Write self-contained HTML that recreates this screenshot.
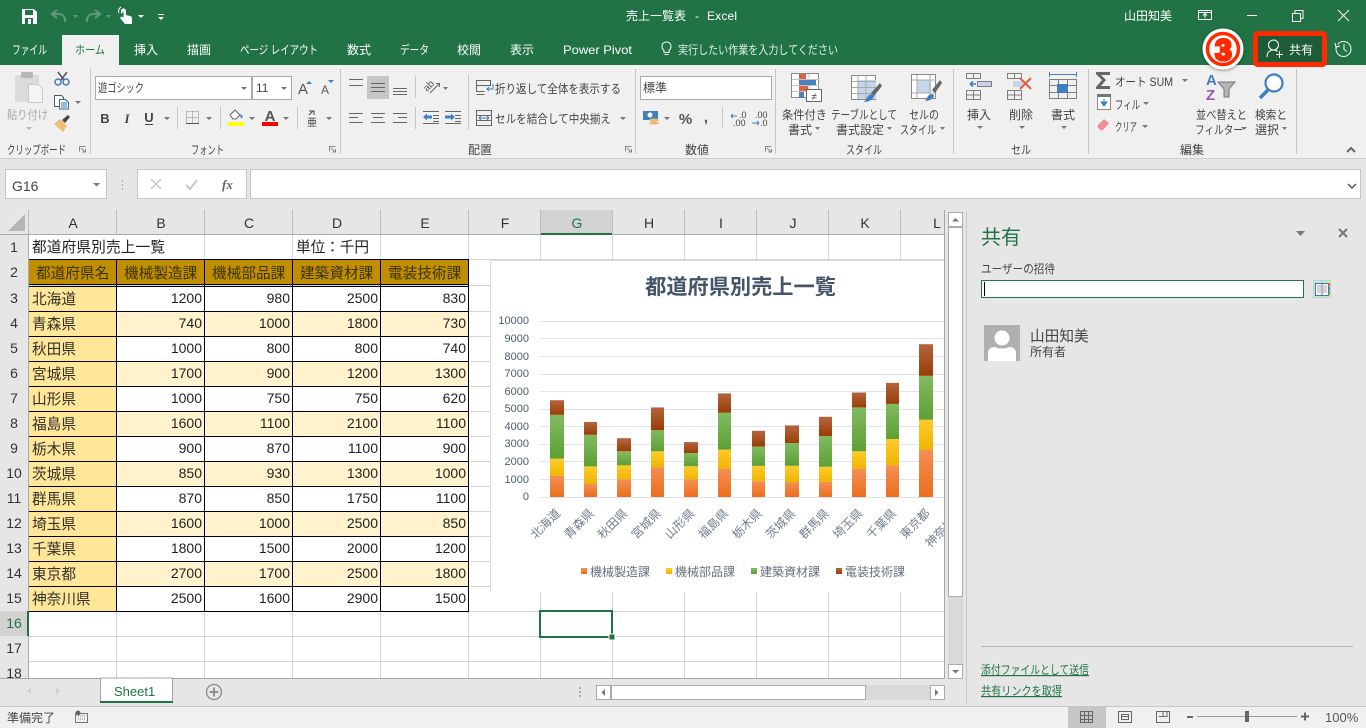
<!DOCTYPE html>
<html lang="ja"><head><meta charset="utf-8"><title>売上一覧表 - Excel</title>
<style>
html,body{margin:0;padding:0;width:1366px;height:728px;overflow:hidden;background:#e6e6e6}
svg{display:block}
text{font-family:"Liberation Sans","Noto Sans CJK JP",sans-serif;white-space:pre}
.r text{font-size:12px;fill:#444}
.w text{font-size:12px;fill:#fff}
.c text{font-size:14.67px;fill:#222}
.d text{font-size:14.67px;fill:#3d3100}
.n text{font-size:14px;fill:#222;text-anchor:end}
.h text{font-size:14px;fill:#333;text-anchor:middle}
.a text{font-size:11px;fill:#4d5b70;text-anchor:end}
.x text{font-size:12px;fill:#737d8c;text-anchor:end}
.l text{font-size:12px;fill:#66707e}
.gl line{stroke:#d4d4d4;stroke-width:1}
.bk line{stroke:#000;stroke-width:1}
.sp line{stroke:#c6c6c6;stroke-width:1}
.ic{fill:none;stroke:#6a6a6a;stroke-width:1}
.ar path{fill:#777}
</style></head><body>
<svg width="1366" height="728" viewBox="0 0 1366 728" xmlns="http://www.w3.org/2000/svg">
<defs>
<linearGradient id="o" x1="0" y1="0" x2="0" y2="1"><stop offset="0" stop-color="#f48f55"/><stop offset="1" stop-color="#ec6e1c"/></linearGradient>
<linearGradient id="y" x1="0" y1="0" x2="0" y2="1"><stop offset="0" stop-color="#ffcb2c"/><stop offset="1" stop-color="#efb500"/></linearGradient>
<linearGradient id="g" x1="0" y1="0" x2="0" y2="1"><stop offset="0" stop-color="#82ba62"/><stop offset="1" stop-color="#5ca033"/></linearGradient>
<linearGradient id="b" x1="0" y1="0" x2="0" y2="1"><stop offset="0" stop-color="#b4653f"/><stop offset="1" stop-color="#9b3d04"/></linearGradient>
<clipPath id="cc"><rect x="490" y="260" width="454" height="332"/></clipPath>
<filter id="sh" x="-20%" y="-20%" width="140%" height="140%"><feDropShadow dx="0" dy="1" stdDeviation="1.5" flood-color="#000" flood-opacity=".45"/></filter>
</defs>

<rect width="1366" height="728" fill="#e6e6e6"/>
<rect width="1366" height="65" fill="#217346"/>
<rect y="65" width="1366" height="93" fill="#f0f0f0"/>
<rect y="158" width="1366" height="1" fill="#cfcfcf"/>

<!-- QAT -->
<g>
<path d="M22 9h12l3 3v12H22z" fill="#fff"/><rect x="25" y="10" width="8" height="5" fill="#217346"/><rect x="25" y="18" width="8" height="6" fill="#217346"/><rect x="28" y="19" width="3" height="5" fill="#fff"/>
<path d="M65 22c1-6-4-9-9-8h-3" fill="none" stroke="#5f9a7c" stroke-width="2"/><path d="M57 10l-5 4 5 4" fill="none" stroke="#5f9a7c" stroke-width="2"/>
<path d="M73 15h5l-2.500 3z" fill="#5f9a7c"/>
<path d="M87 22c-1-6 4-9 9-8h3" fill="none" stroke="#5f9a7c" stroke-width="2"/><path d="M95 10l5 4-5 4" fill="none" stroke="#5f9a7c" stroke-width="2"/>
<path d="M106 15h5l-2.500 3z" fill="#5f9a7c"/>
<path d="M121 14v-3a2.500 2.500 0 0 1 5 0v4l4 1c2 .5 2 2 2 3v5h-7l-5-6 1.500-1.500 2 1v-6z" fill="#fff"/><path d="M119 13a4.500 4.500 0 0 1 2-6" stroke="#fff" fill="none"/>
<path d="M138 15h6l-3 3z" fill="#fff"/>
<rect x="158" y="14" width="6" height="1" fill="#fff"/><path d="M158 17h6l-3 3z" fill="#fff"/>
</g>

<!-- title -->
<g class="w">
<text x="626" y="20" textLength="60" style="font-size:12px">売上一覧表</text>
<text x="695" y="20" style="font-size:12px">-</text>
<text x="707" y="20" textLength="30" style="font-size:12px">Excel</text>
<text x="1124" y="20" textLength="48" style="font-size:12px">山田知美</text>
</g>
<g fill="none" stroke="#fff">
<path d="M1198.500 10.500h13v9h-13zM1198.500 12.500h13M1205 18v-4M1203 15.500l2-2 2 2"/>
<path d="M1247 15.500h10"/>
<path d="M1292.500 13.500h8v8h-8zM1295 13v-2.500h8v8h-2.500"/>
<path d="M1338 10l11 11M1349 10l-11 11"/>
</g>

<!-- tabs -->
<rect x="62" y="35" width="57" height="30" fill="#f0f0f0"/>
<g class="w">
<text x="12" y="54" textLength="35" lengthAdjust="spacingAndGlyphs">ファイル</text>
<text x="134" y="54" textLength="24" lengthAdjust="spacingAndGlyphs">挿入</text>
<text x="187" y="54" textLength="24" lengthAdjust="spacingAndGlyphs">描画</text>
<text x="240" y="54" textLength="78" lengthAdjust="spacingAndGlyphs">ページ レイアウト</text>
<text x="347" y="54" textLength="24" lengthAdjust="spacingAndGlyphs">数式</text>
<text x="400" y="54" textLength="29" lengthAdjust="spacingAndGlyphs">データ</text>
<text x="457" y="54" textLength="24" lengthAdjust="spacingAndGlyphs">校閲</text>
<text x="510" y="54" textLength="24" lengthAdjust="spacingAndGlyphs">表示</text>
<text x="563" y="54" textLength="69" lengthAdjust="spacingAndGlyphs">Power Pivot</text>
<text x="678" y="54" textLength="160" lengthAdjust="spacingAndGlyphs" style="fill:#dfeee6">実行したい作業を入力してください</text>
</g>
<text x="75" y="54" fill="#217346" textLength="30" lengthAdjust="spacingAndGlyphs" style="font-size:12px">ホーム</text>
<path d="M664 50.500c-4-4-1.500-8.500 2.500-8.500s6.500 4.500 2.500 8.500v2h-5zM664.500 54.500h4" fill="none" stroke="#fff"/>

<!-- share -->
<rect x="1255.500" y="33.500" width="69" height="31" rx="2" fill="#1e5c38" stroke="#ff2a00" stroke-width="5"/>
<circle cx="1273.500" cy="45" r="5" fill="none" stroke="#fff"/><path d="M1267 57c0-5 3-7 6.500-7 2 0 3 .5 4 1.500" fill="none" stroke="#fff"/><path d="M1276 54.500h7M1279.500 51v7" stroke="#fff" fill="none"/>
<text x="1289" y="54" fill="#fff" textLength="24" style="font-size:12px">共有</text>
<circle cx="1343.500" cy="49" r="7.500" fill="none" stroke="#fff"/><path d="M1335 43l1 4 4-1" fill="#217346" stroke="#fff"/><path d="M1344 44v5.500l3 2" fill="none" stroke="#fff"/>
<!-- step number -->
<g filter="url(#sh)"><circle cx="1223" cy="49" r="20.500" fill="#fff"/></g>
<circle cx="1223" cy="49" r="15.500" fill="none" stroke="#ff2a00" stroke-width="3.500"/>
<text x="1223.500" y="60" text-anchor="middle" fill="#ff2a00" stroke="#ff2a00" stroke-width="2.800" style="font-size:30px;font-weight:bold">3</text>

<!-- ribbon separators -->
<g class="sp">
<line x1="90.500" y1="69" x2="90.500" y2="154"/><line x1="340.500" y1="69" x2="340.500" y2="154"/><line x1="635.500" y1="69" x2="635.500" y2="154"/><line x1="775.500" y1="69" x2="775.500" y2="154"/><line x1="953.500" y1="69" x2="953.500" y2="154"/><line x1="1088.500" y1="69" x2="1088.500" y2="154"/><line x1="1296.500" y1="69" x2="1296.500" y2="154"/>
<line x1="177.500" y1="107" x2="177.500" y2="129"/><line x1="220.500" y1="107" x2="220.500" y2="129"/><line x1="297.500" y1="107" x2="297.500" y2="129"/>
<line x1="415.500" y1="76" x2="415.500" y2="98"/><line x1="415.500" y1="107" x2="415.500" y2="129"/><line x1="468.500" y1="75" x2="468.500" y2="130"/><line x1="722.500" y1="107" x2="722.500" y2="129"/>
</g>

<!-- ribbon labels -->
<g class="r">
<text x="7" y="154" textLength="59" lengthAdjust="spacingAndGlyphs">クリップボード</text>
<text x="191" y="154" textLength="33" lengthAdjust="spacingAndGlyphs">フォント</text>
<text x="468" y="154" textLength="24" lengthAdjust="spacingAndGlyphs">配置</text>
<text x="685" y="154" textLength="24" lengthAdjust="spacingAndGlyphs">数値</text>
<text x="846" y="154" textLength="36" lengthAdjust="spacingAndGlyphs">スタイル</text>
<text x="1011" y="154" textLength="20" lengthAdjust="spacingAndGlyphs">セル</text>
<text x="1180" y="154" textLength="24" lengthAdjust="spacingAndGlyphs">編集</text>
<text x="7" y="119" textLength="41" lengthAdjust="spacingAndGlyphs" style="fill:#a8a8a8">貼り付け</text>
<text x="495" y="93" textLength="126" lengthAdjust="spacingAndGlyphs">折り返して全体を表示する</text>
<text x="495" y="123" textLength="116" lengthAdjust="spacingAndGlyphs">セルを結合して中央揃え</text>
<text x="782" y="119" textLength="45" lengthAdjust="spacingAndGlyphs">条件付き</text>
<text x="788" y="134" textLength="24" lengthAdjust="spacingAndGlyphs">書式</text>
<text x="831" y="119" textLength="66" lengthAdjust="spacingAndGlyphs">テーブルとして</text>
<text x="836" y="134" textLength="48" lengthAdjust="spacingAndGlyphs">書式設定</text>
<text x="909" y="119" textLength="30" lengthAdjust="spacingAndGlyphs">セルの</text>
<text x="900" y="134" textLength="36" lengthAdjust="spacingAndGlyphs">スタイル</text>
<text x="967" y="119" textLength="24" lengthAdjust="spacingAndGlyphs">挿入</text>
<text x="1009" y="119" textLength="24" lengthAdjust="spacingAndGlyphs">削除</text>
<text x="1051" y="119" textLength="24" lengthAdjust="spacingAndGlyphs">書式</text>
<text x="1115" y="86" textLength="58" lengthAdjust="spacingAndGlyphs">オート SUM</text>
<text x="1115" y="109" textLength="25" lengthAdjust="spacingAndGlyphs">フィル</text>
<text x="1115" y="131" textLength="22" lengthAdjust="spacingAndGlyphs">クリア</text>
<text x="1196" y="119" textLength="51" lengthAdjust="spacingAndGlyphs">並べ替えと</text>
<text x="1195" y="134" textLength="48" lengthAdjust="spacingAndGlyphs">フィルター</text>
<text x="1255" y="119" textLength="32" lengthAdjust="spacingAndGlyphs">検索と</text>
<text x="1255" y="134" textLength="24" lengthAdjust="spacingAndGlyphs">選択</text>
</g>

<!-- small arrows -->
<g class="ar">
<path d="M26 127h6l-3 3z" style="fill:#b5b5b5"/>
<path d="M75 101h6l-3 3zM241 87h6l-3 3zM281 87h6l-3 3zM164 117h6l-3 3zM206 117h6l-3 3zM249 117h6l-3 3zM283 117h6l-3 3zM326 117h6l-3 3zM443 87h5l-2.500 3zM620 117h6l-3 3zM760 87h6l-3 3zM664 117h6l-3 3zM815 127h5l-2.500 3zM887 127h5l-2.500 3zM940 127h5l-2.500 3zM977 126h6l-3 3zM1019 126h6l-3 3zM1061 126h6l-3 3zM1182 79h6l-3 3zM1143 102h6l-3 3zM1142 125h6l-3 3zM1241 127h6l-3 3zM1282 127h5l-2.500 3z"/>
</g>
<!-- dialog launchers -->
<g fill="none" stroke="#888"><path d="M79.500 151.500v-5h6M81 148l4 4M85.500 149v3h-3M329.500 151.500v-5h6M331 148l4 4M335.500 149v3h-3M625.500 151.500v-5h6M627 148l4 4M631.500 149v3h-3M765.500 151.500v-5h6M767 148l4 4M771.500 149v3h-3"/></g>
<path d="M1347 152l4-4 4 4" fill="none" stroke="#666" stroke-width="2"/>

<!-- clipboard group -->
<rect x="15" y="75" width="24" height="27" rx="1" fill="#dcdadb"/><rect x="21" y="72" width="12" height="6" rx="1" fill="#b8b6b7"/>
<path d="M28.500 84.500h10l4 4v14h-14z" fill="#f4f4f4" stroke="#c9c9c9"/>
<circle cx="58" cy="82" r="3" fill="none" stroke="#3f7fbf" stroke-width="1.500"/><circle cx="66" cy="82" r="3" fill="none" stroke="#3f7fbf" stroke-width="1.500"/><path d="M58 72l6 8M67 72l-6 8" stroke="#555" stroke-width="1.500"/>
<path d="M54.500 95.500h7l2 2v9h-9z" fill="#fff" stroke="#555"/><path d="M59.500 99.500h6l3 3v6.500h-9z" fill="#fff" stroke="#2f6fa7"/><path d="M61 103h6M61 105h6M61 107h6" stroke="#2f6fa7"/>
<path d="M54 124l6-5 7 7-4 6z" fill="#f0bd76"/><path d="M62 120l6-5 2 2-5 6z" fill="#444"/>

<!-- font group -->
<rect x="95.500" y="76.500" width="156" height="23" fill="#fff" stroke="#ababab"/>
<rect x="252.500" y="76.500" width="39" height="23" fill="#fff" stroke="#ababab"/>
<text x="98" y="92" fill="#444" textLength="46" lengthAdjust="spacingAndGlyphs" style="font-size:12px">遊ゴシック</text>
<text x="256" y="92" fill="#444" style="font-size:12px">11</text>
<path d="M241 87h6l-3 3zM281 87h6l-3 3z" fill="#777"/>
<text x="303" y="94" text-anchor="middle" fill="#555" style="font-size:15px">A</text><path d="M306 84l3-3 3 3z" fill="#3f7fbf"/>
<text x="325" y="94" text-anchor="middle" fill="#555" style="font-size:12px">A</text><path d="M328 80h6l-3 3z" fill="#3f7fbf"/>
<text x="105" y="123" text-anchor="middle" fill="#444" style="font-size:13px;font-weight:bold">B</text>
<text x="127" y="123" text-anchor="middle" fill="#444" style="font-size:13px;font-style:italic;font-family:'Liberation Serif',serif;font-weight:bold">I</text>
<text x="149" y="122" text-anchor="middle" fill="#444" style="font-size:13px;font-weight:bold">U</text><rect x="145" y="124" width="8" height="1" fill="#444"/>
<path d="M186.500 111.500h12M186.500 117.500h12M192.500 111.500v12M186.500 111.500v12M198.500 111.500v12" fill="none" stroke="#888" stroke-dasharray="1 1"/><path d="M186 123.500h13" stroke="#555"/>
<path d="M230 115l5-5 5 5-4 4h-3z" fill="#fff" stroke="#666"/><path d="M240 114l3 2-2 3z" fill="#3f7fbf"/><rect x="228" y="122" width="16" height="4" fill="#ffff00"/>
<text x="270" y="121" text-anchor="middle" fill="#555" style="font-size:15px;font-weight:bold">A</text><rect x="262" y="122" width="16" height="4" fill="#f00"/>
<text x="312" y="126" text-anchor="middle" fill="#444" style="font-size:10px">亜</text><path d="M309 111h5v4M313 111l-4 4" fill="none" stroke="#444"/>

<!-- alignment -->
<rect x="367" y="76" width="22" height="23" fill="#c6c6c6"/>
<g stroke="#666" fill="none">
<path d="M349 79.500h14M349 85.500h14"/>
<path d="M371 83.500h14M371 87.500h14M371 91.500h14"/>
<path d="M393 88.500h14M393 91.500h14M393 94.500h14"/>
<path d="M349 113.500h14M349 117.500h9M349 122.500h14"/>
<path d="M371 113.500h14M373 117.500h10M371 122.500h14"/>
<path d="M393 113.500h14M398 117.500h9M393 122.500h14"/>
<path d="M423 111.500h16M433 115.500h6M433 118.500h6M433 121.500h6M423 123.500h16"/>
<path d="M445 111.500h16M455 115.500h6M455 118.500h6M455 121.500h6M445 123.500h16"/>
<path d="M430 93l9-9M436 83.500h3.500v3.500"/>
</g>
<text transform="translate(427 92) rotate(-45)" fill="#555" style="font-size:10px">ab</text>
<path d="M423 117l4-3.500v2h5v3h-5v2z" fill="#3f7fbf"/><path d="M455 117l-4-3.500v2h-6v3h6v2z" fill="#3f7fbf"/>
<!-- wrap / merge -->
<g fill="none" stroke="#666"><path d="M476.500 80.500h14v5h-14zM476.500 85.500v6h8M476.500 94.500h8"/><path d="M476.500 110.500h15v15h-15zM476.500 115.500h15M476.500 120.500h15"/></g>
<path d="M493 84v5h-6M489 87l-2 2 2 2" fill="none" stroke="#3f7fbf"/>
<path d="M479 118h10M479 118l2-2M479 118l2 2M489 118l-2-2M489 118l-2 2" stroke="#3f7fbf" fill="none"/>

<!-- number -->
<rect x="640.500" y="76.500" width="131" height="23" fill="#fff" stroke="#ababab"/>
<text x="643" y="92" fill="#444" textLength="24" style="font-size:12px">標準</text>
<rect x="643" y="111" width="15" height="9" fill="#3f7fbf"/><circle cx="650" cy="115" r="2.500" fill="#fff"/><ellipse cx="654" cy="120" rx="5" ry="1.500" fill="#edb86b"/><ellipse cx="654" cy="123" rx="5" ry="1.500" fill="#edb86b"/>
<text x="685.500" y="124" text-anchor="middle" fill="#555" style="font-size:15px;font-weight:bold">%</text>
<text x="706" y="122" text-anchor="middle" fill="#555" style="font-size:15px;font-weight:bold">,</text>
<text x="739" y="118" fill="#444" style="font-size:9px">.0</text><text x="733" y="126" fill="#444" style="font-size:9px">.00</text>
<text x="755" y="118" fill="#444" style="font-size:9px">.00</text><text x="760" y="126" fill="#444" style="font-size:9px">.0</text>
<path d="M731 116h6M731 116l2-2M731 116l2 2M752 123h7M759 123l-2-2M759 123l-2 2" stroke="#3f7fbf" fill="none"/>

<!-- cond format -->
<g fill="#fff" stroke="#8a8a8a"><rect x="791.500" y="73.500" width="27" height="24"/></g>
<path d="M800 74v24M809 74v24M792 79.500h27M792 85.500h27M792 91.500h27" stroke="#c4c4c4"/>
<rect x="799" y="74" width="7" height="5" fill="#e06040"/><rect x="799" y="80" width="17" height="5" fill="#4a80bd"/><rect x="799" y="86" width="9" height="5" fill="#e06040"/><rect x="799" y="92" width="5" height="6" fill="#4a80bd"/>
<rect x="806.500" y="89.500" width="15" height="12" fill="#fff" stroke="#666"/><text x="814" y="100" text-anchor="middle" fill="#444" style="font-size:10px">≠</text>
<!-- table format -->
<rect x="851.500" y="75.500" width="24" height="24" fill="#fff" stroke="#8a8a8a"/><rect x="858" y="80" width="18" height="19" fill="#c5d5ea"/><path d="M858 76v23M866 76v23M852 81.500h24M852 87.500h24M852 93.500h24" stroke="#a9a9a9"/>
<path d="M880 83l-9 10 3 3 8-10z" fill="#666"/><path d="M868 96c3-3 6-2 6 0s-4 6-10 6c2-2 3-4 4-6z" fill="#3f7fbf"/>
<!-- cell style -->
<rect x="911.500" y="74.500" width="24" height="24" fill="#fff" stroke="#8a8a8a"/><rect x="917" y="80" width="14" height="13" fill="#c5d5ea"/><path d="M917 75v23M930 75v23M912 80h24M912 93h24" stroke="#a9a9a9"/>
<path d="M940 80l-8 10 3 3 7-10z" fill="#666"/><path d="M928 96c3-3 6-2 6 0s-4 5-9 5c1-1 2-3 3-5z" fill="#3f7fbf"/>

<!-- cells -->
<g fill="none" stroke="#7f7f7f">
<path d="M966.500 73.500h14v5h-14zM973.500 73.500v5M966.500 90.500h14v9h-14zM966.500 95h14M973.500 90.500v9"/>
<path d="M977.500 81.500h14v5h-14zM984.500 81.500v5"/>
<path d="M1007.500 73.500h14v5h-14zM1014.500 73.500v5M1007.500 90.500h14v9h-14zM1007.500 95h14M1014.500 90.500v9"/>
<path d="M1049.500 79.500h27v19h-27zM1058.500 79.500v19M1067.500 79.500v19M1049.500 85.500h27M1049.500 92.500h27"/>
</g>
<rect x="978" y="82" width="13" height="4" fill="#c5d5ea"/>
<path d="M970 84h6M970 84l3-2.500M970 84l3 2.500" stroke="#3f7fbf" fill="none" stroke-width="1.500"/>
<rect x="1013" y="81" width="10" height="6" fill="#c5d5ea"/>
<path d="M1020 78l11 11M1031 78l-11 11" stroke="#e0603c" stroke-width="2"/>
<rect x="1057" y="84" width="11" height="9" fill="#3f7fbf"/>
<path d="M1049.500 72v5M1076.500 72v5M1050 74.500h26" stroke="#3f7fbf" fill="none"/>

<!-- editing -->
<path d="M1096 72h14v3h-9l5 5-5 6h9v3h-14v-2l6-7-6-6z" fill="#666"/>
<rect x="1097.500" y="94.500" width="13" height="15" fill="#fff" stroke="#8a8a8a"/><rect x="1097" y="94" width="14" height="3" fill="#777"/><path d="M1104 99v6M1101 102l3 4 3-4z" stroke="#3f7fbf" fill="#3f7fbf"/>
<path d="M1097 126l7-7 5 4-6 7h-3z" fill="#ef8e9b"/>
<text x="1206" y="85" fill="#3f7fbf" style="font-size:15px;font-weight:bold">A</text>
<text x="1206" y="100" fill="#8f5ab0" style="font-size:15px;font-weight:bold">Z</text>
<path d="M1218 82h17l-6 7v8h-5v-8z" fill="#b5b5b5" stroke="#777"/>
<circle cx="1274" cy="83" r="8.500" fill="#fff" stroke="#3f7fbf" stroke-width="2.200"/><path d="M1268 90l-8 8" stroke="#3f7fbf" stroke-width="3.500"/>

<!-- formula bar -->
<rect x="5.500" y="169.500" width="101" height="29" fill="#fff" stroke="#c6c6c6"/>
<text x="12" y="191" fill="#444" style="font-size:14px">G16</text>
<path d="M93 183h7l-3.500 3.500z" fill="#777"/>
<path d="M122 180h1v2h-1zM122 184h1v2h-1zM122 188h1v2h-1z" fill="#aaa"/>
<rect x="137.500" y="169.500" width="109" height="29" fill="#fff" stroke="#c6c6c6"/>
<path d="M151 179l10 10M161 179l-10 10" stroke="#c8c8c8" stroke-width="1.500"/>
<path d="M186 185l4 4 7-9" stroke="#c8c8c8" stroke-width="2" fill="none"/>
<text x="222" y="189" fill="#666" style="font-size:13px;font-style:italic;font-family:'Liberation Serif',serif;font-weight:bold">fx</text>
<rect x="250.500" y="169.500" width="1110" height="29" fill="#fff" stroke="#c6c6c6"/>
<path d="M1348 184l4 4 4-4" stroke="#555" fill="none" stroke-width="1.500"/>

<!-- column headers -->
<rect x="0" y="210" width="944" height="25" fill="#e6e6e6"/>
<rect x="541" y="210" width="72" height="25" fill="#d2d2d2"/>
<rect x="541" y="233" width="72" height="2" fill="#217346"/>
<path d="M8 231h17v-17z" fill="#b5b5b5"/>
<g stroke="#bdbdbd"><path d="M28.500 210v25M116.500 210v25M204.500 210v25M292.500 210v25M380.500 210v25M468.500 210v25M540.500 210v25M612.500 210v25M684.500 210v25M756.500 210v25M828.500 210v25M900.500 210v25"/></g>
<rect x="0" y="234" width="541" height="1" fill="#ababab"/><rect x="613" y="234" width="331" height="1" fill="#ababab"/>
<g class="h">
<text x="73" y="228">A</text><text x="161" y="228">B</text><text x="249" y="228">C</text><text x="337" y="228">D</text><text x="425" y="228">E</text><text x="505" y="228">F</text><text x="577" y="228" style="fill:#217346">G</text><text x="649" y="228">H</text><text x="721" y="228">I</text><text x="793" y="228">J</text><text x="865" y="228">K</text><text x="937" y="228">L</text>
</g>

<!-- grid -->
<rect x="29" y="235" width="915" height="443" fill="#fff"/>
<rect x="0" y="235" width="28" height="443" fill="#e6e6e6"/>
<rect x="0" y="611" width="28" height="25" fill="#d2d2d2"/>
<g class="gl">
<line x1="29" y1="259.500" x2="944" y2="259.500"/><line x1="29" y1="285.500" x2="944" y2="285.500"/><line x1="29" y1="311.500" x2="944" y2="311.500"/><line x1="29" y1="336.500" x2="944" y2="336.500"/><line x1="29" y1="361.500" x2="944" y2="361.500"/><line x1="29" y1="386.500" x2="944" y2="386.500"/><line x1="29" y1="411.500" x2="944" y2="411.500"/><line x1="29" y1="436.500" x2="944" y2="436.500"/><line x1="29" y1="461.500" x2="944" y2="461.500"/><line x1="29" y1="486.500" x2="944" y2="486.500"/><line x1="29" y1="511.500" x2="944" y2="511.500"/><line x1="29" y1="536.500" x2="944" y2="536.500"/><line x1="29" y1="561.500" x2="944" y2="561.500"/><line x1="29" y1="586.500" x2="944" y2="586.500"/><line x1="29" y1="611.500" x2="944" y2="611.500"/><line x1="29" y1="636.500" x2="944" y2="636.500"/><line x1="29" y1="661.500" x2="944" y2="661.500"/>
<line x1="116.500" y1="235" x2="116.500" y2="678"/><line x1="204.500" y1="235" x2="204.500" y2="678"/><line x1="292.500" y1="235" x2="292.500" y2="678"/><line x1="380.500" y1="235" x2="380.500" y2="678"/><line x1="468.500" y1="235" x2="468.500" y2="678"/><line x1="540.500" y1="235" x2="540.500" y2="678"/><line x1="612.500" y1="235" x2="612.500" y2="678"/><line x1="684.500" y1="235" x2="684.500" y2="678"/><line x1="756.500" y1="235" x2="756.500" y2="678"/><line x1="828.500" y1="235" x2="828.500" y2="678"/><line x1="900.500" y1="235" x2="900.500" y2="678"/>
</g>
<!-- cells covering row-1 gridlines -->
<rect x="29" y="235" width="175" height="24" fill="#fff"/>
<rect x="293" y="235" width="87" height="24" fill="#fff"/>

<!-- table fills -->
<rect x="29" y="260" width="440" height="25" fill="#bf8f00"/>
<rect x="29" y="286" width="88" height="325" fill="#ffe699"/>
<rect x="117" y="311" width="352" height="25" fill="#fff2cc"/><rect x="117" y="361" width="352" height="25" fill="#fff2cc"/><rect x="117" y="411" width="352" height="25" fill="#fff2cc"/><rect x="117" y="461" width="352" height="25" fill="#fff2cc"/><rect x="117" y="511" width="352" height="25" fill="#fff2cc"/><rect x="117" y="561" width="352" height="25" fill="#fff2cc"/>
<rect x="117" y="286" width="352" height="25" fill="#fff"/><rect x="117" y="336" width="352" height="25" fill="#fff"/><rect x="117" y="386" width="352" height="25" fill="#fff"/><rect x="117" y="436" width="352" height="25" fill="#fff"/><rect x="117" y="486" width="352" height="25" fill="#fff"/><rect x="117" y="536" width="352" height="25" fill="#fff"/><rect x="117" y="586" width="352" height="25" fill="#fff"/>
<g class="bk">
<line x1="29" y1="259.500" x2="469" y2="259.500"/><line x1="29" y1="284.500" x2="469" y2="284.500"/><line x1="29" y1="286.500" x2="469" y2="286.500"/><line x1="29" y1="311.500" x2="469" y2="311.500"/><line x1="29" y1="336.500" x2="469" y2="336.500"/><line x1="29" y1="361.500" x2="469" y2="361.500"/><line x1="29" y1="386.500" x2="469" y2="386.500"/><line x1="29" y1="411.500" x2="469" y2="411.500"/><line x1="29" y1="436.500" x2="469" y2="436.500"/><line x1="29" y1="461.500" x2="469" y2="461.500"/><line x1="29" y1="486.500" x2="469" y2="486.500"/><line x1="29" y1="511.500" x2="469" y2="511.500"/><line x1="29" y1="536.500" x2="469" y2="536.500"/><line x1="29" y1="561.500" x2="469" y2="561.500"/><line x1="29" y1="586.500" x2="469" y2="586.500"/><line x1="29" y1="611.500" x2="469" y2="611.500"/>
<line x1="116.500" y1="259" x2="116.500" y2="612"/><line x1="204.500" y1="259" x2="204.500" y2="612"/><line x1="292.500" y1="259" x2="292.500" y2="612"/><line x1="380.500" y1="259" x2="380.500" y2="612"/><line x1="468.500" y1="259" x2="468.500" y2="612"/>
</g>
<rect x="28" y="235" width="1" height="443" fill="#ababab"/>
<rect x="27" y="611" width="2" height="25" fill="#217346"/>

<!-- row headers -->
<g class="h">
<text x="14" y="252">1</text><text x="14" y="277">2</text><text x="14" y="303">3</text><text x="14" y="328">4</text><text x="14" y="353">5</text><text x="14" y="378">6</text><text x="14" y="403">7</text><text x="14" y="428">8</text><text x="14" y="453">9</text><text x="14" y="478">10</text><text x="14" y="503">11</text><text x="14" y="528">12</text><text x="14" y="553">13</text><text x="14" y="578">14</text><text x="14" y="603">15</text><text x="14" y="628" style="fill:#217346">16</text><text x="14" y="653">17</text><text x="14" y="678">18</text>
</g>
<rect x="0" y="678" width="944" height="28" fill="#e6e6e6"/>

<!-- cell text -->
<g class="c">
<text x="32" y="252" textLength="133">都道府県別売上一覧</text><text x="296" y="252" textLength="73">単位：千円</text>
</g>
<g class="d">
<text x="36" y="278">都道府県名</text><text x="124" y="278">機械製造課</text><text x="212" y="278">機械部品課</text><text x="300" y="278">建築資材課</text><text x="388" y="278">電装技術課</text>
</g>
<g class="c" style="opacity:.92">
<text x="32" y="304">北海道</text><text x="32" y="329">青森県</text><text x="32" y="354">秋田県</text><text x="32" y="379">宮城県</text><text x="32" y="404">山形県</text><text x="32" y="429">福島県</text><text x="32" y="454">栃木県</text><text x="32" y="479">茨城県</text><text x="32" y="504">群馬県</text><text x="32" y="529">埼玉県</text><text x="32" y="554">千葉県</text><text x="32" y="579">東京都</text><text x="32" y="604">神奈川県</text>
</g>
<g class="n">
<text x="202" y="303">1200</text><text x="290" y="303">980</text><text x="378" y="303">2500</text><text x="466" y="303">830</text>
<text x="202" y="328">740</text><text x="290" y="328">1000</text><text x="378" y="328">1800</text><text x="466" y="328">730</text>
<text x="202" y="353">1000</text><text x="290" y="353">800</text><text x="378" y="353">800</text><text x="466" y="353">740</text>
<text x="202" y="378">1700</text><text x="290" y="378">900</text><text x="378" y="378">1200</text><text x="466" y="378">1300</text>
<text x="202" y="403">1000</text><text x="290" y="403">750</text><text x="378" y="403">750</text><text x="466" y="403">620</text>
<text x="202" y="428">1600</text><text x="290" y="428">1100</text><text x="378" y="428">2100</text><text x="466" y="428">1100</text>
<text x="202" y="453">900</text><text x="290" y="453">870</text><text x="378" y="453">1100</text><text x="466" y="453">900</text>
<text x="202" y="478">850</text><text x="290" y="478">930</text><text x="378" y="478">1300</text><text x="466" y="478">1000</text>
<text x="202" y="503">870</text><text x="290" y="503">850</text><text x="378" y="503">1750</text><text x="466" y="503">1100</text>
<text x="202" y="528">1600</text><text x="290" y="528">1000</text><text x="378" y="528">2500</text><text x="466" y="528">850</text>
<text x="202" y="553">1800</text><text x="290" y="553">1500</text><text x="378" y="553">2000</text><text x="466" y="553">1200</text>
<text x="202" y="578">2700</text><text x="290" y="578">1700</text><text x="378" y="578">2500</text><text x="466" y="578">1800</text>
<text x="202" y="603">2500</text><text x="290" y="603">1600</text><text x="378" y="603">2900</text><text x="466" y="603">1500</text>
</g>

<!-- selection -->
<rect x="540" y="611" width="72" height="26" fill="#fff" stroke="#217346" stroke-width="2"/>
<rect x="609" y="634" width="6" height="6" fill="#217346" stroke="#fff" stroke-width="1"/>

<!-- chart -->
<g clip-path="url(#cc)">
<rect x="490.500" y="260.500" width="460" height="332" fill="#fff" stroke="#d9dee6"/>
<text x="740.500" y="294" text-anchor="middle" fill="#44546a" style="font-size:21.200px;font-weight:bold">都道府県別売上一覧</text>
<g stroke="#dfe3ea"><path d="M540 321.500h404M540 338.500h404M540 356.500h404M540 374.500h404M540 391.500h404M540 409.500h404M540 426.500h404M540 444.500h404M540 461.500h404M540 479.500h404M540 497.500h404"/></g>
<g class="a">
<text x="529" y="324">10000</text><text x="529" y="342">9000</text><text x="529" y="360">8000</text><text x="529" y="377">7000</text><text x="529" y="395">6000</text><text x="529" y="412">5000</text><text x="529" y="430">4000</text><text x="529" y="447">3000</text><text x="529" y="465">2000</text><text x="529" y="483">1000</text><text x="529" y="500">0</text>
</g>
<g fill="url(#o)">
<rect x="550" y="475.900" width="14" height="21.100"/><rect x="584" y="484" width="13" height="13"/><rect x="617" y="479.400" width="14" height="17.600"/><rect x="651" y="467.100" width="13" height="29.900"/><rect x="684" y="479.400" width="14" height="17.600"/><rect x="718" y="468.900" width="13" height="28.100"/><rect x="752" y="481.200" width="13" height="15.800"/><rect x="785" y="482.100" width="14" height="14.900"/><rect x="819" y="481.700" width="13" height="15.300"/><rect x="852" y="468.900" width="14" height="28.100"/><rect x="886" y="465.400" width="13" height="31.600"/><rect x="919" y="449.600" width="14" height="47.400"/>
</g>
<g fill="url(#y)">
<rect x="550" y="458.700" width="14" height="17.200"/><rect x="584" y="466.400" width="13" height="17.600"/><rect x="617" y="465.300" width="14" height="14.100"/><rect x="651" y="451.300" width="13" height="15.800"/><rect x="684" y="466.200" width="14" height="13.200"/><rect x="718" y="449.600" width="13" height="19.300"/><rect x="752" y="465.900" width="13" height="15.300"/><rect x="785" y="465.800" width="14" height="16.300"/><rect x="819" y="466.800" width="13" height="14.900"/><rect x="852" y="451.300" width="14" height="17.600"/><rect x="886" y="439" width="13" height="26.400"/><rect x="919" y="419.700" width="14" height="29.900"/>
</g>
<g fill="url(#g)">
<rect x="550" y="414.800" width="14" height="43.900"/><rect x="584" y="434.800" width="13" height="31.600"/><rect x="617" y="451.200" width="14" height="14.100"/><rect x="651" y="430.200" width="13" height="21.100"/><rect x="684" y="453" width="14" height="13.200"/><rect x="718" y="412.700" width="13" height="36.900"/><rect x="752" y="446.600" width="13" height="19.300"/><rect x="785" y="443" width="14" height="22.800"/><rect x="819" y="436.100" width="13" height="30.700"/><rect x="852" y="407.400" width="14" height="43.900"/><rect x="886" y="403.900" width="13" height="35.100"/><rect x="919" y="375.800" width="14" height="43.900"/>
</g>
<g fill="url(#b)">
<rect x="550" y="400.200" width="14" height="14.600"/><rect x="584" y="422" width="13" height="12.800"/><rect x="617" y="438.200" width="14" height="13"/><rect x="651" y="407.400" width="13" height="22.800"/><rect x="684" y="442.100" width="14" height="10.900"/><rect x="718" y="393.400" width="13" height="19.300"/><rect x="752" y="430.800" width="13" height="15.800"/><rect x="785" y="425.400" width="14" height="17.600"/><rect x="819" y="416.800" width="13" height="19.300"/><rect x="852" y="392.500" width="14" height="14.900"/><rect x="886" y="382.800" width="13" height="21.100"/><rect x="919" y="344.200" width="14" height="31.600"/>
</g>
<g class="x">
<text transform="translate(561 514) rotate(-45)">北海道</text>
<text transform="translate(594.600 514) rotate(-45)">青森県</text>
<text transform="translate(628.200 514) rotate(-45)">秋田県</text>
<text transform="translate(661.800 514) rotate(-45)">宮城県</text>
<text transform="translate(695.400 514) rotate(-45)">山形県</text>
<text transform="translate(729 514) rotate(-45)">福島県</text>
<text transform="translate(762.600 514) rotate(-45)">栃木県</text>
<text transform="translate(796.200 514) rotate(-45)">茨城県</text>
<text transform="translate(829.800 514) rotate(-45)">群馬県</text>
<text transform="translate(863.400 514) rotate(-45)">埼玉県</text>
<text transform="translate(897 514) rotate(-45)">千葉県</text>
<text transform="translate(930.600 514) rotate(-45)">東京都</text>
<text transform="translate(964.200 514) rotate(-45)">神奈川県</text>
</g>
<rect x="581" y="568" width="6" height="6" fill="url(#o)"/><rect x="666" y="568" width="6" height="6" fill="url(#y)"/><rect x="751" y="568" width="6" height="6" fill="url(#g)"/><rect x="836" y="568" width="6" height="6" fill="url(#b)"/>
<g class="l">
<text x="590" y="576">機械製造課</text><text x="675" y="576">機械部品課</text><text x="760" y="576">建築資材課</text><text x="845" y="576">電装技術課</text>
</g>
</g>
<rect x="944" y="210" width="1" height="469" fill="#a6a6a6"/>
<rect x="0" y="678" width="945" height="1" fill="#a6a6a6"/>

<!-- v scrollbar -->
<rect x="948" y="212" width="15" height="466" fill="#d9d9d9"/>
<rect x="948.500" y="212.500" width="14" height="14" fill="#fff" stroke="#ababab"/>
<rect x="948.500" y="227.500" width="14" height="369" fill="#fff" stroke="#ababab"/>
<rect x="948.500" y="664.500" width="14" height="14" fill="#fff" stroke="#ababab"/>
<path d="M952 221.500l3.500-3.500 3.500 3.500z" fill="#777"/><path d="M952 670h7l-3.500 3.500z" fill="#777"/>

<!-- tabs bar -->
<path d="M27 691l4-3.500v7zM60 691l-4-3.500v7z" fill="#cfcfcf"/>
<rect x="100.500" y="678" width="72" height="24" fill="#fff" stroke="#a6a6a6"/>
<rect x="100" y="701" width="73" height="2" fill="#217346"/>
<text x="114" y="696" fill="#217346" style="font-size:13px">Sheet1</text>
<circle cx="214" cy="692" r="7.500" fill="none" stroke="#8a8a8a" stroke-width="1.300"/><path d="M209.500 692h9M214 687.500v9" stroke="#8a8a8a" stroke-width="1.800"/>
<path d="M579 687h2v2h-2zM579 691h2v2h-2zM579 695h2v2h-2z" fill="#aaa"/>
<!-- h scrollbar -->
<rect x="596" y="685" width="349" height="15" fill="#d9d9d9"/>
<rect x="596.500" y="685.500" width="14" height="14" fill="#fff" stroke="#ababab"/>
<rect x="611.500" y="685.500" width="254" height="14" fill="#fff" stroke="#ababab"/>
<rect x="930.500" y="685.500" width="14" height="14" fill="#fff" stroke="#ababab"/>
<path d="M605 689v7l-3.500-3.500zM935 689v7l3.500-3.500z" fill="#777"/>

<!-- task pane -->
<rect x="966" y="212" width="1" height="491" fill="#c6c6c6"/>
<text x="981" y="244" fill="#217346" style="font-size:20px">共有</text>
<path d="M1296 231h9l-4.500 5z" fill="#777"/>
<path d="M1339 229l8 8M1347 229l-8 8" stroke="#777" stroke-width="2"/>
<text x="981" y="273" fill="#444" textLength="74" lengthAdjust="spacingAndGlyphs" style="font-size:12px">ユーザーの招待</text>
<rect x="981.500" y="280.500" width="322" height="17" fill="#fff" stroke="#217346"/>
<rect x="984" y="282" width="1" height="14" fill="#000"/>
<rect x="1313.500" y="280.500" width="17" height="17" fill="#c6e6d2" stroke="#b0dcc2"/>
<rect x="1315.500" y="283.500" width="13" height="12" fill="#fff" stroke="#4a70b0"/><path d="M1322 284v11" stroke="#4a70b0"/><path d="M1317 286h4M1317 288h4M1317 290h4M1317 292h4M1323 286h4M1323 288h4M1323 290h4M1323 292h4" stroke="#aaa"/><rect x="1328" y="283" width="2" height="3" fill="#e0603c"/><rect x="1328" y="287" width="2" height="3" fill="#4a80bd"/><rect x="1328" y="291" width="2" height="3" fill="#5ca033"/>
<rect x="984" y="325" width="36" height="36" fill="#b0b0b0"/>
<circle cx="1002" cy="338" r="7.500" fill="#fff"/><path d="M988 361v-8c0-4 3-6 7-6 3 2 11 2 14 0 4 0 7 2 7 6v8z" fill="#fff"/>
<text x="1030" y="341" fill="#444" style="font-size:14.670px">山田知美</text>
<text x="1030" y="356" fill="#444" style="font-size:12px">所有者</text>
<rect x="981" y="646" width="372" height="1" fill="#b5b5b5"/>
<text x="981" y="674" fill="#217346" text-decoration="underline" textLength="108" lengthAdjust="spacingAndGlyphs" style="font-size:12px">添付ファイルとして送信</text>
<text x="981" y="695" fill="#217346" text-decoration="underline" textLength="81" lengthAdjust="spacingAndGlyphs" style="font-size:12px">共有リンクを取得</text>

<!-- status bar -->
<rect y="706" width="1366" height="1" fill="#c6c6c6"/>
<rect y="707" width="1366" height="21" fill="#f0f0f0"/>
<text x="7" y="722" fill="#444" textLength="48" style="font-size:12px">準備完了</text>
<rect x="75.500" y="713.500" width="12" height="9" fill="none" stroke="#777"/><circle cx="78" cy="713" r="2.500" fill="#666"/><path d="M78 716h8M78 719h8" stroke="#888" stroke-dasharray="1 1"/>
<rect x="1068" y="707" width="38" height="21" fill="#c6c6c6"/>
<g fill="none" stroke="#666">
<path d="M1080.500 711.500h12v11h-12zM1084.500 711.500v11M1088.500 711.500v11M1080.500 715.500h12M1080.500 719.500h12"/>
<path d="M1118.500 711.500h13v11h-13zM1121.500 714.500h7v5h-7zM1122 716.500h6"/>
<path d="M1156.500 711.500h13v11h-13zM1163 711.500v5h-4M1163 716.500h4v-5"/>
<path d="M1197 716.500h100" stroke="#999"/>
</g>
<rect x="1187" y="716" width="6" height="2" fill="#666"/>
<rect x="1245" y="711" width="4" height="11" fill="#666"/>
<path d="M1301 716.500h8M1305 712.500v8" stroke="#666" stroke-width="2"/>
<text x="1325" y="722" fill="#555" style="font-size:13px">100%</text>
</svg>
</body></html>
